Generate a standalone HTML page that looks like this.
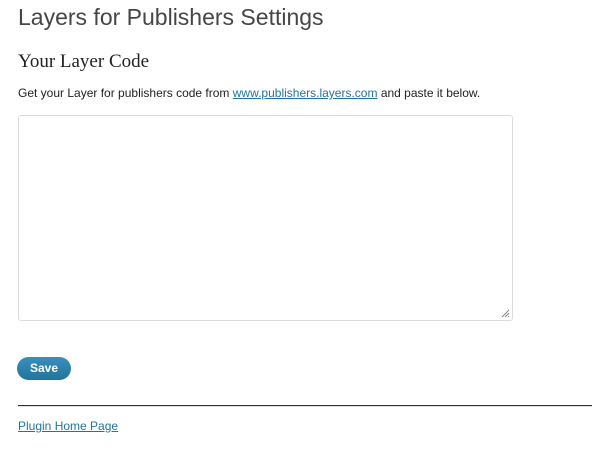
<!DOCTYPE html>
<html><head><style>
body{margin:0;background:#fff;font-family:"Liberation Sans",sans-serif;color:#333;width:592px;height:455px;overflow:hidden;position:relative}
.a{position:absolute;white-space:nowrap}
h1{position:absolute;left:18px;top:2px;margin:0;font-weight:normal;font-size:23px;color:#464646;line-height:30px}
h2{position:absolute;left:18px;top:50px;margin:0;font-weight:normal;font-family:"Liberation Serif",serif;font-size:19px;color:#222;line-height:24px}
a{color:#21759b;text-decoration:underline}
.ta{position:absolute;left:18px;top:115px;width:495px;height:206px;border:1px solid #dcdcdc;border-radius:3px;box-sizing:border-box}
.btn{position:absolute;left:17px;top:357px;width:54px;height:23px;border-radius:12px;background:linear-gradient(#3a8fbc,#21759b);color:#fff;font-weight:bold;font-size:12px;text-align:center;line-height:22px}
.hr{position:absolute;left:18px;top:405px;width:574px;height:1px;background:#333;border-bottom:1px solid #ddd}
</style></head><body>
<h1>Layers for Publishers Settings</h1>
<h2>Your Layer Code</h2>
<div class="a" style="left:18px;top:86px;font-size:12px;color:#222">Get your Layer for publishers code from <a>www.publishers.layers.com</a> and paste it below.</div>
<div class="ta"><svg style="position:absolute;right:2px;bottom:2px" width="10" height="10"><path d="M9 2L2 9M9 5L5 9M9 8L8 9" stroke="#888" stroke-width="1"/></svg></div>
<div class="btn">Save</div>
<div class="hr"></div>
<div class="a" style="left:18px;top:419px;font-size:12px"><a>Plugin Home Page</a></div>
</body></html>
